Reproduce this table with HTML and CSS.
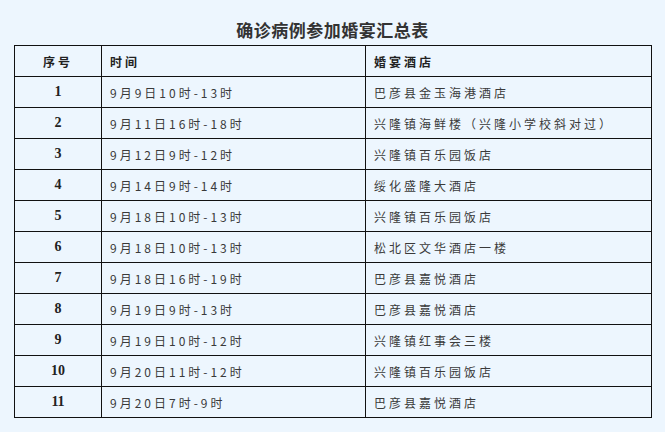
FILE: index.html
```html
<!DOCTYPE html>
<html lang="zh-CN">
<head>
<meta charset="utf-8">
<title>确诊病例参加婚宴汇总表</title>
<link rel="stylesheet" href="styles.css">
</head>
<body>
<div class="page">
  <h1 class="title">确诊病例参加婚宴汇总表</h1>
  <table class="summary">
    <colgroup>
      <col class="c-no">
      <col class="c-time">
      <col class="c-hotel">
    </colgroup>
    <thead>
      <tr><th class="no">序号</th><th>时间</th><th>婚宴酒店</th></tr>
    </thead>
    <tbody>
      <tr><td class="no">1</td><td>9月9日10时-13时</td><td>巴彦县金玉海港酒店</td></tr>
      <tr><td class="no">2</td><td>9月11日16时-18时</td><td>兴隆镇海鲜楼（兴隆小学校斜对过）</td></tr>
      <tr><td class="no">3</td><td>9月12日9时-12时</td><td>兴隆镇百乐园饭店</td></tr>
      <tr><td class="no">4</td><td>9月14日9时-14时</td><td>绥化盛隆大酒店</td></tr>
      <tr><td class="no">5</td><td>9月18日10时-13时</td><td>兴隆镇百乐园饭店</td></tr>
      <tr><td class="no">6</td><td>9月18日10时-13时</td><td>松北区文华酒店一楼</td></tr>
      <tr><td class="no">7</td><td>9月18日16时-19时</td><td>巴彦县嘉悦酒店</td></tr>
      <tr><td class="no">8</td><td>9月19日9时-13时</td><td>巴彦县嘉悦酒店</td></tr>
      <tr><td class="no">9</td><td>9月19日10时-12时</td><td>兴隆镇红事会三楼</td></tr>
      <tr><td class="no">10</td><td>9月20日11时-12时</td><td>兴隆镇百乐园饭店</td></tr>
      <tr><td class="no">11</td><td>9月20日7时-9时</td><td>巴彦县嘉悦酒店</td></tr>
    </tbody>
  </table>
</div>
</body>
</html>
```
FILE: styles.css
```css
html, body {
  margin: 0;
  padding: 0;
  background: #edf6fe;
}
.page {
  width: 665px;
  height: 432px;
  overflow: hidden;
  font-family: "Noto Sans CJK SC", "Noto Sans", sans-serif;
  color: #3a3a3a;
}
.title {
  margin: 0 0 5px 0;
  padding-top: 20px;
  font-size: 17px;
  line-height: 20px;
  font-weight: bold;
  text-align: center;
  color: #333;
  letter-spacing: 0.5px;
}
.summary {
  margin-left: 14px;
  width: 637px;
  border-collapse: collapse;
  table-layout: fixed;
}
.c-no { width: 87px; }
.c-time { width: 264px; }
.c-hotel { width: 286px; }
.summary tr {
  height: 31px;
}
.summary th,
.summary td {
  border: 1px solid #111;
  height: 31px;
  padding: 0 0 0 8px;
  text-align: left;
  font-size: 12px;
  letter-spacing: 3px;
  white-space: nowrap;
  box-sizing: border-box;
}
.summary th {
  font-weight: bold;
  color: #222;
}
.summary th.no {
  text-align: center;
  padding: 0;
}
.summary td.no {
  text-align: center;
  padding: 0;
  font-family: "Liberation Serif", "DejaVu Serif", serif;
  font-weight: bold;
  font-size: 14px;
  letter-spacing: 0;
  color: #222;
}
```
